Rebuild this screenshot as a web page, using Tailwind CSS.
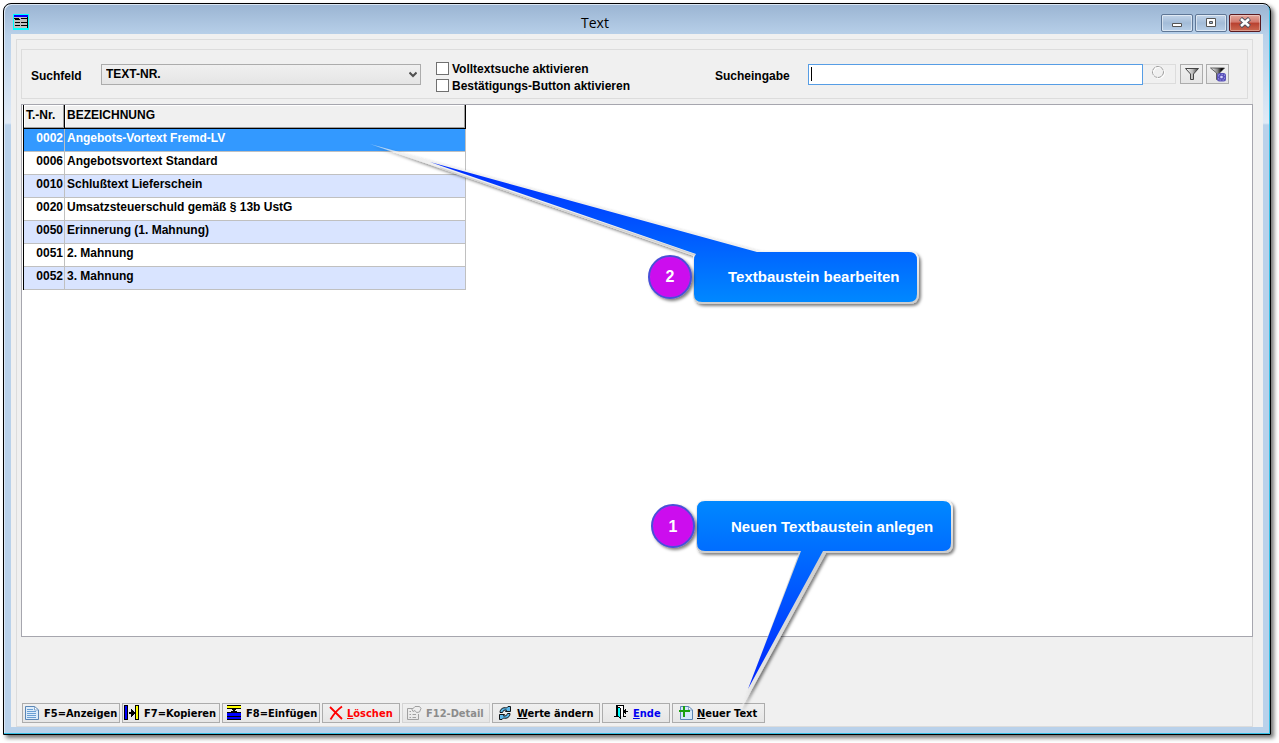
<!DOCTYPE html>
<html lang="de">
<head>
<meta charset="utf-8">
<title>Text</title>
<script src="https://cdn.jsdelivr.net/npm/@tailwindcss/browser@4"></script>
</head>
<body class="relative flex h-screen overflow-hidden bg-white pt-[3px] pr-2 pb-2 pl-[3px] font-['Liberation_Sans',Arial,sans-serif] text-[12px] leading-4 font-bold text-black">

<div class="flex min-w-0 flex-1 flex-col rounded-t-lg border border-black bg-[linear-gradient(#9ab4d2_0px,#b9d1ea_32px,#e0eaf6_119px,#b9d1ea_121px)] px-[7px] pb-[7px] shadow-[3px_3px_4px_rgba(0,0,0,0.55),inset_-1px_-1px_0_#35c0e6,inset_1px_1px_0_#dbe7f4]">

  <header class="flex h-[30px] shrink-0 items-center justify-between pr-[2px] pl-[2px]">
    <div class="flex w-[100px] pt-[6px]">
      <svg class="size-4" viewBox="0 0 16 16" shape-rendering="crispEdges"><path fill="#0ff" d="M0 0h16v16H0z"/><path fill="#c0c0c0" d="M1 2h13v12H1z"/><path fill="#00f" d="M1 1h14v2H1z"/><path d="M1 4h5v1H1zM8 4h6v1H8zM2 5h5v1H2zM2 8h5v1H2zM8 8h6v1H8zM2 11h5v1H2zM8 11h6v1H8zM14 3h1v11h-1z"/></svg>
    </div>
    <h1 class="mr-21 pt-2 font-['Open_Sans',sans-serif] text-[14px] leading-5 font-normal">Text</h1>
    <div class="flex w-[100px] gap-[2px] pt-2">
      <button aria-label="Minimieren" class="flex h-[18px] w-8 items-center justify-center rounded-xs border border-[#5f7796] bg-linear-to-b from-[#c3d5ea] via-[#a3bcd8] to-[#b8cfe8] inset-ring inset-ring-white/50">
        <svg class="h-3 w-3" viewBox="0 0 12 12"><path fill="#fff" stroke="#555" d="M1.500 6.500h9v3h-9z"/></svg>
      </button>
      <button aria-label="Maximieren" class="flex h-[18px] w-8 items-center justify-center rounded-xs border border-[#5f7796] bg-linear-to-b from-[#c3d5ea] via-[#a3bcd8] to-[#b8cfe8] inset-ring inset-ring-white/50">
        <svg class="h-3 w-3" viewBox="0 0 12 12"><path fill="#fff" stroke="#555" d="M1.500 1.500h9v8h-9z"/><path fill="#9ab4d2" stroke="#555" d="M4.500 4.500h3v2h-3z"/></svg>
      </button>
      <button aria-label="Schließen" class="flex h-[18px] w-8 items-center justify-center rounded-xs border border-[#5a1a20] bg-[linear-gradient(#e3a79c_0%,#d2786c_45%,#b8402f_50%,#cc6a52_100%)] inset-ring inset-ring-white/35">
        <svg class="h-3 w-3" viewBox="0 0 12 12"><path stroke="#4d4f5c" stroke-width="4.400" d="M1.500 1.500l9 8M10.500 1.500l-9 8"/><path stroke="#fff" stroke-width="2.600" d="M2 2l8 7M10 2L2 9"/></svg>
      </button>
    </div>
  </header>

  <main class="flex min-h-0 flex-1 flex-col bg-[#f0f0f0] pt-[5px] pr-[10px] pl-[5px]">
    <div class="flex min-h-0 flex-1 flex-col border border-[#dcdcdc] pt-[9px] pl-1">

      <form class="mr-1 flex h-[50px] shrink-0 items-center border border-[#dcdcdc] pr-[18px] pl-[9px]">
        <label for="feld" class="w-[70px] pt-1">Suchfeld</label>
        <div class="relative flex">
          <select id="feld" class="h-[21px] w-80 appearance-none border border-[#acacac] bg-linear-to-b from-[#f0f0f0] to-[#e5e5e5] pl-1 font-bold"><option>TEXT-NR.</option></select>
          <svg class="pointer-events-none absolute top-[7px] right-1 h-2 w-2" viewBox="0 0 8 8" fill="none" stroke="#505050" stroke-width="2"><path d="M.500 1.500L4 5l3.500-3.500"/></svg>
        </div>
        <div class="ml-[15px] flex flex-col gap-px pt-[6px]">
          <label class="flex items-center gap-[3px]"><input type="checkbox" class="size-[13px] appearance-none border border-[#707070] bg-white">Volltextsuche aktivieren</label>
          <label class="flex items-center gap-[3px]"><input type="checkbox" class="size-[13px] appearance-none border border-[#707070] bg-white">Bestätigungs-Button aktivieren</label>
        </div>
        <label for="eingabe" class="ml-auto w-[93px] pt-1">Sucheingabe</label>
        <div class="flex h-[21px] w-[335px] items-center border border-[#569de5] bg-white pl-[2px]">
          <span class="h-[14px] w-px bg-black"></span>
          <input id="eingabe" type="text" class="h-full min-w-0 flex-1 outline-none">
        </div>
        <button type="button" disabled aria-label="Suchen" class="flex h-5 w-[33px] items-start justify-center border border-l-0 border-[#dcdcdc] pr-[2px]"><svg class="size-[14px]" viewBox="0 0 14 14" fill="none"><circle cx="7.700" cy="7.700" r="5.500" stroke="#fff" stroke-width="1.500"/><circle cx="7" cy="7" r="5.500" stroke="#9c9c9c" stroke-dasharray="4 .600"/></svg></button>
        <button type="button" aria-label="Filter" class="ml-1 flex h-5 w-[23px] items-center justify-center border border-[#acacac] bg-linear-to-b from-[#f0f0f0] to-[#e5e5e5]">
          <svg class="h-3 w-4" viewBox="0 0 16 12"><defs><linearGradient id="fg"><stop offset="0" stop-color="#fff"/><stop offset=".55" stop-color="#bbb"/><stop offset="1" stop-color="#333"/></linearGradient></defs><path fill="url(#fg)" stroke="#444" d="M1.500.500h13L9.500 6v5.500h-3V6z"/></svg>
        </button>
        <button type="button" aria-label="Filter bearbeiten" class="ml-[3px] flex h-5 w-[23px] items-center justify-center border border-[#acacac] bg-linear-to-b from-[#f0f0f0] to-[#e5e5e5]">
          <svg class="h-4 w-4" viewBox="0 0 16 16"><defs><linearGradient id="fh"><stop offset="0" stop-color="#fff"/><stop offset=".5" stop-color="#888"/><stop offset=".8" stop-color="#000"/></linearGradient></defs><path fill="url(#fh)" stroke="#333" stroke-width=".7" d="M.500 2h14L9.500 7v6.500h-3V7z"/><rect x="7" y="7" width="9" height="8.500" rx="2.500" fill="#5a52b8"/><path stroke="#8c86e0" stroke-dasharray="1.500 1.500" fill="none" d="M8.500 8.500h6v5.500h-6z"/><circle cx="11.500" cy="11" r="1.300" fill="#d5d0ff"/></svg>
        </button>
      </form>

      <section class="mt-[5px] min-h-0 flex-1 border border-r-0 border-[#a6a6ae] bg-white pl-px shadow-[1px_0_0_#a6a6ae]">
        <table class="w-[443px] table-fixed border-separate border-spacing-0 border-l border-black">
          <colgroup><col class="w-[41px]"><col></colgroup>
          <thead>
            <tr class="h-6 bg-[#f0f0f0] text-left align-top">
              <th class="border-r border-b border-black p-0 pt-[2px] pl-[2px] font-bold shadow-[inset_-1px_-1px_0_#a0a0a0,inset_1px_1px_0_#fff]">T.-Nr.</th>
              <th class="border-r border-b border-black p-0 pt-[2px] pl-[2px] font-bold shadow-[inset_-1px_-1px_0_#a0a0a0,inset_1px_1px_0_#fff]">BEZEICHNUNG</th>
            </tr>
          </thead>
          <tbody class="align-top [&_td]:h-[23px] [&_td]:border-r [&_td]:border-b [&_td]:border-[#c0c0c0] [&_td]:p-0 [&_td]:pt-px [&_td:first-child]:pr-px [&_td:first-child]:text-right [&_td:last-child]:pl-[2px]">
            <tr class="bg-[#3399ff] text-white"><td>0002</td><td>Angebots-Vortext Fremd-LV</td></tr>
            <tr><td>0006</td><td>Angebotsvortext Standard</td></tr>
            <tr class="bg-[#d9e4ff]"><td>0010</td><td>Schlußtext Lieferschein</td></tr>
            <tr><td>0020</td><td>Umsatzsteuerschuld gemäß § 13b UstG</td></tr>
            <tr class="bg-[#d9e4ff]"><td>0050</td><td>Erinnerung (1. Mahnung)</td></tr>
            <tr><td>0051</td><td>2. Mahnung</td></tr>
            <tr class="bg-[#d9e4ff]"><td>0052</td><td>3. Mahnung</td></tr>
          </tbody>
        </table>
      </section>

      <footer class="flex shrink-0 gap-[2px] pt-[66px] pb-[3px] pl-px font-['DejaVu_Sans_Condensed','DejaVu_Sans',sans-serif] text-[11px] whitespace-nowrap [&_button]:flex [&_button]:h-5 [&_button]:items-center [&_button]:border [&_button]:border-[#acacac] [&_button]:bg-linear-to-b [&_button]:from-[#f0f0f0] [&_button]:to-[#e6e6e6] [&_span]:pt-[2px] [&_svg]:size-4 [&_svg]:shrink-0">
        <button class="w-[98px] gap-[4px] pl-px"><svg viewBox="0 0 16 16"><path fill="#dcecfb" stroke="#5b86b5" d="M1.500 1.500h9l4 3.500v9.500h-13z"/><path fill="#fff" stroke="#5b86b5" stroke-width=".7" d="M10.500 1.500V5h4z"/><path stroke="#6a9fd4" d="M3 4.500h6M3 6.500h9M3 8.500h9M3 10.500h9M3 12.500h9"/></svg><span>F5=Anzeigen</span></button>
        <button class="w-[98px] gap-[5px]"><svg viewBox="0 0 16 16" shape-rendering="crispEdges"><path d="M1 0h4v15H1zM12 0h4v15h-4zM6 7h2v2H6zM8 4h1v8H8zM9 5h1v6H9zM10 6h1v4h-1zM11 7h1v2h-1z"/><path fill="#00f" d="M2 1h2v13H2z"/><path fill="#ff0" d="M13 1h2v13h-2z"/></svg><span>F7=Kopieren</span></button>
        <button class="w-[98px] gap-[4px] pl-[3px]"><svg viewBox="0 0 16 16" shape-rendering="crispEdges"><path d="M1 0h14v4H1zM7 4h2v3H7zM6 4h4v1H6zM5 6h6v1H5zM1 7h14v8H1z"/><path fill="#ff0" d="M1 1h14v2H1z"/><path fill="#00f" d="M1 8h14v3H1zM1 12h14v2H1z"/></svg><span>F8=Einfügen</span></button>
        <button class="w-[78px] gap-[3px] pl-[5px] text-[#ff0000]"><svg viewBox="0 0 16 16" fill="none" stroke="#f00"><path stroke-width="1.800" d="M2 2l12 12M14 1.500C9 5 6 8.500 2.500 14.500"/></svg><span><u>L</u>öschen</span></button>
        <button disabled class="w-[88px] gap-[4px] border-[#d4d4d4]! pl-[3px] text-[#8c8c8c]"><svg viewBox="0 0 16 16" fill="none" stroke="#a0a0a0"><path d="M7 3.500H1.500v11h11V9M3.500 6.500H5M3.500 9.500H5M3.500 12.500H5M6.500 9.500H10M6.500 12.500H10"/><path fill="#eee" d="M6 4.500l3-3h4.500l1.500 2-1.500 3.500-3 .500-1.500-2-2 1z"/></svg><span>F12-Detail</span></button>
        <button class="w-[108px] gap-[4px] pl-[4px]"><svg viewBox="0 0 16 16"><g id="half"><path fill="#5db8ea" stroke="#000" stroke-width=".9" d="M3 7.500C3 4 6 2 9.500 3L11 1.500h2.500V6.500H8.500L9.500 5C7.500 4.700 6 5.500 5.500 7.500z"/></g><use href="#half" transform="rotate(180 8 8)"/></svg><span><u>W</u>erte ändern</span></button>
        <button class="w-[68px] gap-[4px] pl-[10px] text-[#0000f0]"><svg viewBox="0 0 16 16" shape-rendering="crispEdges"><path fill="#fff" d="M4 1h6v10H4z"/><path d="M3 0h8v1H3zM3 0h1v12H3zM10 0h1v12h-1zM1 11h3v1H1zM10 11h3v1h-3z"/><path fill="#0ff" stroke="#000" d="M4.500 1.500l3 2v10l-3-2.500z"/><path d="M10 6h5v1h-5zM12 4h1v5h-1zM11 5h1v3h-1z"/></svg><span><u>E</u>nde</span></button>
        <button class="w-[93px] gap-[3px] pl-[5px]"><svg viewBox="0 0 16 16"><path fill="#d5e8fa" stroke="#5b86b5" d="M2.500 1.500h8l4 3.500v9.500h-12z"/><path fill="#fff" stroke="#5b86b5" stroke-width=".7" d="M10.500 1.500V5h4z"/><path fill="#1aa00e" d="M5 1h2v4h5v2H7v5H5V7H1V5h4z"/></svg><span><u>N</u>euer Text</span></button>
      </footer>
    </div>
  </main>
</div>

<!-- Annotations over the window -->
<svg class="pointer-events-none absolute top-0 left-0 h-[743px] w-[1279px]" viewBox="0 0 1279 743">
  <defs>
    <linearGradient id="up" gradientUnits="userSpaceOnUse" x1="0" y1="150" x2="0" y2="302"><stop offset="0" stop-color="#0020ff"/><stop offset="1" stop-color="#0088ff"/></linearGradient>
    <linearGradient id="down" gradientUnits="userSpaceOnUse" x1="0" y1="501" x2="0" y2="695"><stop offset="0" stop-color="#0088ff"/><stop offset="1" stop-color="#0020ff"/></linearGradient>
    <linearGradient id="rim" x1="0" y1="0" x2="0" y2="1"><stop offset="0" stop-color="#f6f6f6"/><stop offset="1" stop-color="#cdcdcd"/></linearGradient>
    <linearGradient id="rimdown" x1="0" y1="0" x2="0" y2="1"><stop offset="0" stop-color="#f4f4f4"/><stop offset=".24" stop-color="#cdcdcd"/><stop offset=".85" stop-color="#e6e6e6"/><stop offset="1" stop-color="#f4f4f4" stop-opacity=".3"/></linearGradient>
    <linearGradient id="tip" x1="0" y1="0" x2="1" y2="0"><stop offset="0" stop-color="#f4f4f4" stop-opacity=".6"/><stop offset=".15" stop-color="#f0f0f0"/><stop offset="1" stop-color="#f0f0f0"/></linearGradient>
    <filter id="sh" x="-10%" y="-10%" width="120%" height="120%"><feDropShadow dx="2" dy="2" stdDeviation="1.500" flood-opacity=".5"/></filter>
  </defs>
  <g filter="url(#sh)">
    <path fill="url(#rim)" d="M694 250L764 251H909Q919 251 919 261V294Q919 304 909 304H703Q693 304 693 295V257z"/>
    <path fill="url(#tip)" d="M370 144L764 252L694 256z"/>
  </g>
  <path stroke="#d2d2d2" stroke-width="1.500" d="M440 168L695 255"/>
  <path fill="url(#up)" d="M430 162L757 252H909Q917 252 917 260V294Q917 302 909 302H702Q694 302 694 294V260Q694 256 696 254z"/>
  <g filter="url(#sh)">
    <path fill="url(#rimdown)" d="M705 500H944Q953 500 953 509V544Q953 553 944 553H826L739 713L799 553H705Q696 553 696 544V509Q696 500 705 500z"/>
  </g>
  <path fill="url(#down)" d="M705 501H943Q951 501 951 509V543Q951 551 943 551H823L748 689L801 551H705Q697 551 697 543V509Q697 501 705 501z"/>
  <g filter="url(#sh)" fill="#cc11ee" stroke="#4a50d8" stroke-width="2"><circle cx="670" cy="277" r="21"/><circle cx="673" cy="526" r="21"/></g>
</svg>
<div class="pointer-events-none absolute top-[266px] left-[648px] flex items-center text-[15px] leading-5 text-white">
  <span class="w-11 pt-px text-center text-[16px]">2</span><span class="ml-[36px]">Textbaustein bearbeiten</span>
</div>
<div class="pointer-events-none absolute top-[516px] left-[651px] flex items-center text-[15px] leading-5 text-white">
  <span class="w-11 pt-px text-center text-[16px]">1</span><span class="ml-[36px]">Neuen Textbaustein anlegen</span>
</div>
</body>
</html>
